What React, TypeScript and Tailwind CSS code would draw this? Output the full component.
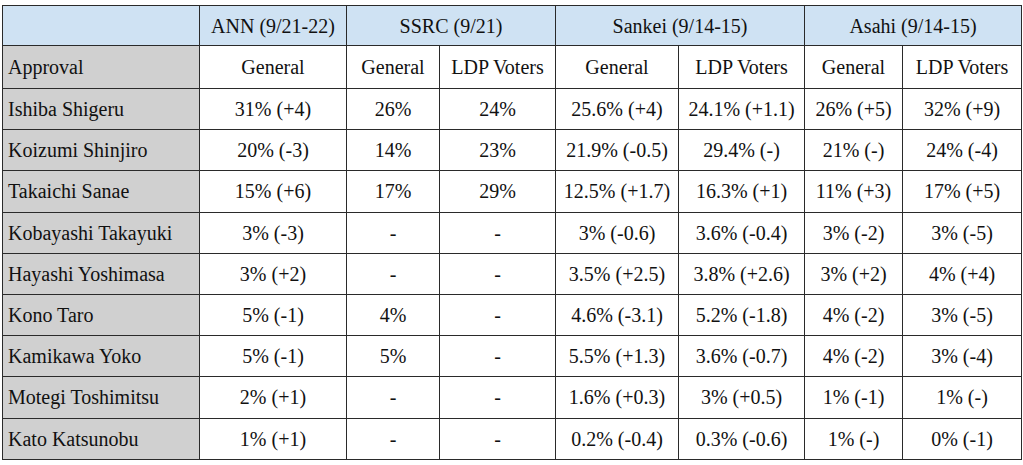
import React from "react";

const rows: [string, string[]][] = [
  ["Ishiba Shigeru", ["31% (+4)", "26%", "24%", "25.6% (+4)", "24.1% (+1.1)", "26% (+5)", "32% (+9)"]],
  ["Koizumi Shinjiro", ["20% (-3)", "14%", "23%", "21.9% (-0.5)", "29.4% (-)", "21% (-)", "24% (-4)"]],
  ["Takaichi Sanae", ["15% (+6)", "17%", "29%", "12.5% (+1.7)", "16.3% (+1)", "11% (+3)", "17% (+5)"]],
  ["Kobayashi Takayuki", ["3% (-3)", "-", "-", "3% (-0.6)", "3.6% (-0.4)", "3% (-2)", "3% (-5)"]],
  ["Hayashi Yoshimasa", ["3% (+2)", "-", "-", "3.5% (+2.5)", "3.8% (+2.6)", "3% (+2)", "4% (+4)"]],
  ["Kono Taro", ["5% (-1)", "4%", "-", "4.6% (-3.1)", "5.2% (-1.8)", "4% (-2)", "3% (-5)"]],
  ["Kamikawa Yoko", ["5% (-1)", "5%", "-", "5.5% (+1.3)", "3.6% (-0.7)", "4% (-2)", "3% (-4)"]],
  ["Motegi Toshimitsu", ["2% (+1)", "-", "-", "1.6% (+0.3)", "3% (+0.5)", "1% (-1)", "1% (-)"]],
  ["Kato Katsunobu", ["1% (+1)", "-", "-", "0.2% (-0.4)", "0.3% (-0.6)", "1% (-)", "0% (-1)"]],
];

const cell = "border border-[#2a2a2a] text-center px-0 py-0";
const first = "border border-[#2a2a2a] bg-[#d0d0d0] text-left pl-[5px] pr-0 py-0";

export default function App() {
  return (
    <div className="w-[1023px] h-[465px] bg-white pl-[2px] pt-[5px]" style={{ fontFamily: '"Liberation Serif", "Times New Roman", serif' }}>
      <table className="table-fixed border-collapse text-[20px] leading-none text-[#111111] w-[1019px]">
        <colgroup>
          <col className="w-[197px]" />
          <col className="w-[147px]" />
          <col className="w-[93px]" />
          <col className="w-[116px]" />
          <col className="w-[123px]" />
          <col className="w-[126px]" />
          <col className="w-[98px]" />
          <col className="w-[119px]" />
        </colgroup>
        <tbody>
          <tr className="h-[40px] bg-[#cfe2f3]">
            <td className={cell}></td>
            <td className={cell}>ANN (9/21-22)</td>
            <td className={cell} colSpan={2}>SSRC (9/21)</td>
            <td className={cell} colSpan={2}>Sankei (9/14-15)</td>
            <td className={cell} colSpan={2}>Asahi (9/14-15)</td>
          </tr>
          <tr className="h-[43px]">
            <td className={first}>Approval</td>
            <td className={cell}>General</td>
            <td className={cell}>General</td>
            <td className={cell}>LDP Voters</td>
            <td className={cell}>General</td>
            <td className={cell}>LDP Voters</td>
            <td className={cell}>General</td>
            <td className={cell}>LDP Voters</td>
          </tr>
          {rows.map(([name, vals]) => (
            <tr key={name} className="h-[41.2px]">
              <td className={first}>{name}</td>
              {vals.map((v, i) => (
                <td key={i} className={cell}>{v}</td>
              ))}
            </tr>
          ))}
        </tbody>
      </table>
    </div>
  );
}
